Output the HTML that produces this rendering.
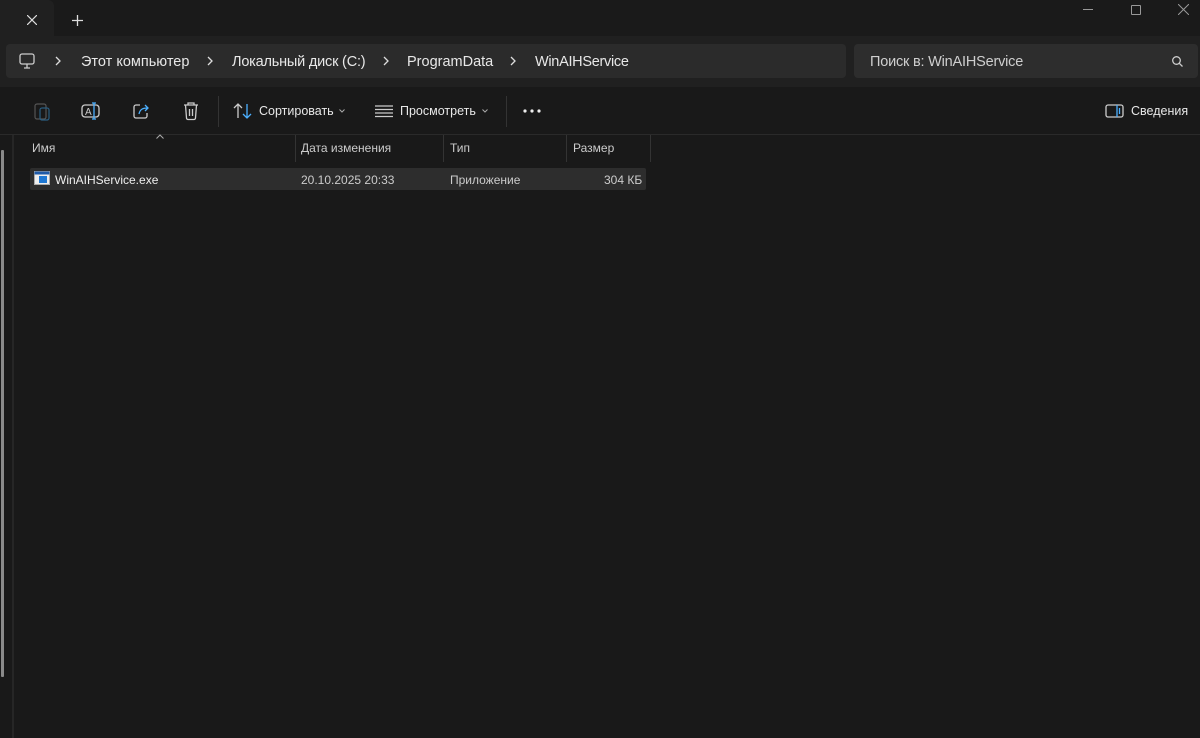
<!DOCTYPE html>
<html><head><meta charset="utf-8"><style>
*{margin:0;padding:0;box-sizing:border-box}
body{width:1200px;height:738px;background:#191919;font-family:"Segoe UI","Liberation Sans",sans-serif;color:#fff;position:relative;overflow:hidden;font-size:14px}
.a{position:absolute}
.t{white-space:nowrap}
</style></head><body>
<div class="a" style="left:0;top:0;width:1200px;height:36px;background:#1a1a1a"></div>
<div class="a" style="left:0;top:0;width:54px;height:37px;background:#202020;border-radius:0 6px 0 0"></div>
<svg class="a" style="left:27px;top:15px" width="10" height="10" viewBox="0 0 10 10" stroke="#ddd" stroke-width="1.2"><path d="M0 0L10 10M10 0L0 10"/></svg>
<svg class="a" style="left:72px;top:15px" width="11" height="11" viewBox="0 0 11 11" stroke="#ddd" stroke-width="1.3"><path d="M5.5 0v11M0 5.5h11"/></svg>
<div class="a" style="left:1083px;top:9px;width:10px;height:1px;background:#999"></div>
<div class="a" style="left:1131px;top:5px;width:10px;height:10px;border:1px solid #999;border-radius:1px"></div>
<svg class="a" style="left:1178px;top:4px" width="11" height="11" viewBox="0 0 11 11" stroke="#999" stroke-width="1"><path d="M0 0L11 11M11 0L0 11"/></svg>
<div class="a" style="left:0;top:36px;width:1200px;height:51px;background:#202020"></div>
<div class="a" style="left:6px;top:44px;width:840px;height:34px;background:#2b2b2b;border-radius:4px"></div>
<svg class="a" style="left:18px;top:52px" width="18" height="18" viewBox="0 0 18 18" fill="none" stroke="#ccc" stroke-width="1.3"><rect x="2" y="2" width="14" height="10" rx="2"/><path d="M6 16h6M9 12v4"/></svg>
<svg class="a" style="left:55px;top:56px" width="6" height="10" viewBox="0 0 6 10" fill="none" stroke="#ddd" stroke-width="1.3"><path d="M1 1l4 4-4 4"/></svg>
<svg class="a" style="left:207px;top:56px" width="6" height="10" viewBox="0 0 6 10" fill="none" stroke="#ddd" stroke-width="1.3"><path d="M1 1l4 4-4 4"/></svg>
<svg class="a" style="left:383px;top:56px" width="6" height="10" viewBox="0 0 6 10" fill="none" stroke="#ddd" stroke-width="1.3"><path d="M1 1l4 4-4 4"/></svg>
<svg class="a" style="left:510px;top:56px" width="6" height="10" viewBox="0 0 6 10" fill="none" stroke="#ddd" stroke-width="1.3"><path d="M1 1l4 4-4 4"/></svg>
<div class="a t" style="top:53px;left:0;font-size:14.5px;color:#e8e8e8;line-height:18px">
<span class="a" style="left:81px">Этот компьютер</span>
<span class="a" style="left:232px;letter-spacing:-0.2px">Локальный диск (C:)</span>
<span class="a" style="left:407px">ProgramData</span>
<span class="a" style="left:535px;letter-spacing:-0.3px">WinAIHService</span></div>
<div class="a" style="left:854px;top:44px;width:344px;height:34px;background:#2d2d2d;border-radius:4px"></div>
<div class="a t" style="left:870px;top:53px;font-size:14.5px;line-height:18px;color:#cfcfcf;letter-spacing:-0.2px">Поиск в: WinAIHService</div>
<svg class="a" style="left:1171px;top:55px" width="13" height="13" viewBox="0 0 13 13" fill="none" stroke="#ccc" stroke-width="1.3"><circle cx="5.5" cy="5.5" r="3.8"/><path d="M8.3 8.3L11.5 11.5"/></svg>
<div class="a" style="left:0;top:134px;width:1200px;height:1px;background:#2a2a2a"></div>
<svg class="a" style="left:33px;top:101px" width="18" height="20" viewBox="0 0 18 20" fill="none" stroke-width="1.2"><rect x="2" y="3" width="11" height="15" rx="2" stroke="#555"/><rect x="7" y="7" width="9" height="12" rx="2" stroke="#2a5d80"/></svg>
<svg class="a" style="left:81px;top:101px" width="20" height="20" viewBox="0 0 20 20" fill="none" stroke-width="1.3"><rect x="1" y="4" width="17" height="12" rx="3" stroke="#ccc"/><text x="4" y="14" font-size="10" fill="#ccc" stroke="none" font-family="Liberation Sans">A</text><path d="M13 2v16M11 2h4M11 18h4" stroke="#4cb0ff"/></svg>
<svg class="a" style="left:132px;top:101px" width="20" height="20" viewBox="0 0 20 20" fill="none" stroke-width="1.3"><path d="M8 4H4a2 2 0 0 0-2 2v9a2 2 0 0 0 2 2h9a2 2 0 0 0 2-2v-3" stroke="#ccc"/><path d="M7 13c1-5 4-6 9-6M13 4l3 3-3 3" stroke="#4cb0ff"/></svg>
<svg class="a" style="left:182px;top:101px" width="18" height="20" viewBox="0 0 18 20" fill="none" stroke="#ccc" stroke-width="1.3"><path d="M2 4h14M6 4V2h6v2M3.5 4l1 13a1.5 1.5 0 0 0 1.5 1.5h6a1.5 1.5 0 0 0 1.5-1.5l1-13M7.5 8v7M10.5 8v7"/></svg>
<div class="a" style="left:218px;top:96px;width:1px;height:31px;background:#333"></div>
<svg class="a" style="left:233px;top:102px" width="20" height="18" viewBox="0 0 20 18" fill="none" stroke-width="1.3"><path d="M5 16V2M1 6l4-4 4 4" stroke="#ccc"/><path d="M14 2v14M10 12l4 4 4-4" stroke="#4cb0ff"/></svg>
<div class="a t" style="left:259px;top:104px;font-size:12.5px;color:#e8e8e8">Сортировать</div>
<svg class="a" style="left:339px;top:109px" width="6" height="4" viewBox="0 0 6 4" fill="none" stroke="#aaa"><path d="M0.5 0.5L3 3 5.5 0.5"/></svg>
<svg class="a" style="left:375px;top:104px" width="18" height="14" viewBox="0 0 18 14" stroke="#ccc" stroke-width="1.2"><path d="M0 2h18M0 5.5h18M0 9h18M0 12.5h18"/></svg>
<div class="a t" style="left:400px;top:104px;font-size:12.5px;color:#e8e8e8">Просмотреть</div>
<svg class="a" style="left:482px;top:109px" width="6" height="4" viewBox="0 0 6 4" fill="none" stroke="#aaa"><path d="M0.5 0.5L3 3 5.5 0.5"/></svg>
<div class="a" style="left:506px;top:96px;width:1px;height:31px;background:#333"></div>
<svg class="a" style="left:523px;top:109px" width="18" height="4"><circle cx="2" cy="2" r="1.6" fill="#eee"/><circle cx="9" cy="2" r="1.6" fill="#eee"/><circle cx="16" cy="2" r="1.6" fill="#eee"/></svg>
<svg class="a" style="left:1105px;top:104px" width="19" height="14" viewBox="0 0 19 14" fill="none" stroke-width="1.3"><rect x="1" y="1" width="17" height="12" rx="2" stroke="#ccc"/><path d="M12 1v12M14.5 4v6" stroke="#4cb0ff"/></svg>
<div class="a t" style="left:1131px;top:104px;font-size:12.5px;color:#e8e8e8">Сведения</div>
<div class="a" style="left:1px;top:150px;width:3px;height:527px;background:#8a8a8a;border-radius:1px"></div>
<div class="a" style="left:12px;top:135px;width:2px;height:603px;background:#262626"></div>
<svg class="a" style="left:156px;top:134px" width="8" height="5" viewBox="0 0 8 5" fill="none" stroke="#aaa"><path d="M0.5 4.5L4 1 7.5 4.5"/></svg>
<div class="a" style="left:295px;top:135px;width:1px;height:27px;background:#333"></div>
<div class="a" style="left:443px;top:135px;width:1px;height:27px;background:#333"></div>
<div class="a" style="left:566px;top:135px;width:1px;height:27px;background:#333"></div>
<div class="a" style="left:650px;top:135px;width:1px;height:27px;background:#333"></div>
<div class="a t" style="top:141px;left:0;font-size:12px;color:#ccc">
<span class="a" style="left:32px">Имя</span><span class="a" style="left:301px">Дата изменения</span><span class="a" style="left:450px">Тип</span><span class="a" style="left:573px">Размер</span></div>
<div class="a" style="left:30px;top:168px;width:616px;height:22px;background:#2d2d2d;border-radius:2px"></div>
<svg class="a" style="left:34px;top:171px" width="16" height="14" viewBox="0 0 16 14"><rect x="0.5" y="0.5" width="15" height="13" fill="#eee" stroke="#aaa"/><rect x="0.5" y="0.5" width="15" height="3" fill="#1e5aa8"/><rect x="5" y="5" width="8" height="7" fill="#1e78d4"/></svg>
<div class="a t" style="top:173px;left:0;font-size:12px;color:#eee">
<span class="a" style="left:55px">WinAIHService.exe</span><span class="a" style="left:301px;color:#ccc">20.10.2025 20:33</span><span class="a" style="left:450px;color:#ccc">Приложение</span><span class="a" style="left:604px;color:#ccc">304 КБ</span></div>
</body></html>
